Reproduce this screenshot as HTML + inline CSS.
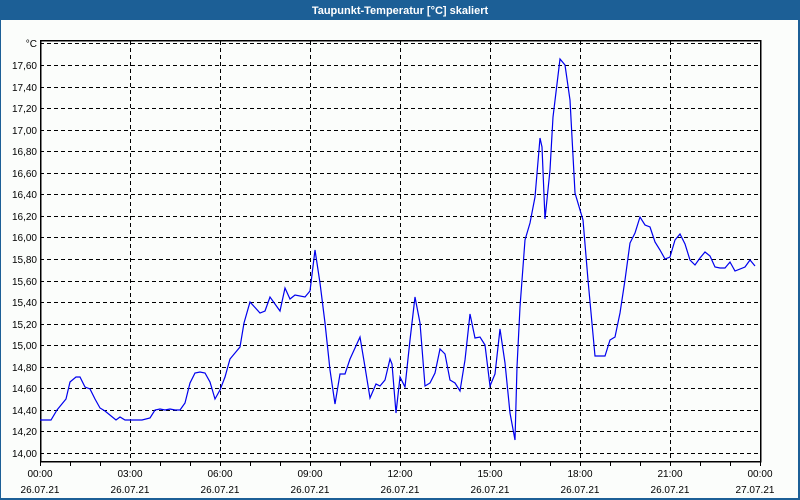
<!DOCTYPE html>
<html><head><meta charset="utf-8"><style>
html,body{margin:0;padding:0;background:#fbfdfb;}
body{width:800px;height:500px;overflow:hidden;position:relative;font-family:"Liberation Sans",sans-serif;}
</style></head><body>
<svg width="800" height="500" xmlns="http://www.w3.org/2000/svg" style="position:absolute;left:0;top:0">
<rect x="0" y="0" width="800" height="500" fill="#1c5f96"/>
<rect x="1" y="20" width="797" height="478" fill="#fbfdfb"/>
<text x="400" y="14" fill="#fff" font-size="11" font-weight="bold" text-anchor="middle" font-family="Liberation Sans, sans-serif">Taupunkt-Temperatur [°C] skaliert</text>
<g stroke="#000" stroke-dasharray="4,3" stroke-width="1" shape-rendering="crispEdges">
<line x1="40" y1="43.5" x2="760" y2="43.5"/>
<line x1="40" y1="65.5" x2="760" y2="65.5"/><line x1="40" y1="87.5" x2="760" y2="87.5"/><line x1="40" y1="108.5" x2="760" y2="108.5"/><line x1="40" y1="130.5" x2="760" y2="130.5"/><line x1="40" y1="151.5" x2="760" y2="151.5"/><line x1="40" y1="173.5" x2="760" y2="173.5"/><line x1="40" y1="194.5" x2="760" y2="194.5"/><line x1="40" y1="216.5" x2="760" y2="216.5"/><line x1="40" y1="237.5" x2="760" y2="237.5"/><line x1="40" y1="259.5" x2="760" y2="259.5"/><line x1="40" y1="281.5" x2="760" y2="281.5"/><line x1="40" y1="302.5" x2="760" y2="302.5"/><line x1="40" y1="324.5" x2="760" y2="324.5"/><line x1="40" y1="345.5" x2="760" y2="345.5"/><line x1="40" y1="367.5" x2="760" y2="367.5"/><line x1="40" y1="388.5" x2="760" y2="388.5"/><line x1="40" y1="410.5" x2="760" y2="410.5"/><line x1="40" y1="431.5" x2="760" y2="431.5"/><line x1="40" y1="453.5" x2="760" y2="453.5"/>
<line x1="130.5" y1="41" x2="130.5" y2="461"/><line x1="220.5" y1="41" x2="220.5" y2="461"/><line x1="310.5" y1="41" x2="310.5" y2="461"/><line x1="400.5" y1="41" x2="400.5" y2="461"/><line x1="490.5" y1="41" x2="490.5" y2="461"/><line x1="580.5" y1="41" x2="580.5" y2="461"/><line x1="670.5" y1="41" x2="670.5" y2="461"/>
</g>
<g stroke="#000" stroke-width="1" shape-rendering="crispEdges">
<rect x="40.5" y="40.5" width="720" height="421" fill="none" stroke-width="1.5"/>
<line x1="70.5" y1="461" x2="70.5" y2="466"/><line x1="100.5" y1="461" x2="100.5" y2="466"/><line x1="130.5" y1="461" x2="130.5" y2="466"/><line x1="160.5" y1="461" x2="160.5" y2="466"/><line x1="190.5" y1="461" x2="190.5" y2="466"/><line x1="220.5" y1="461" x2="220.5" y2="466"/><line x1="250.5" y1="461" x2="250.5" y2="466"/><line x1="280.5" y1="461" x2="280.5" y2="466"/><line x1="310.5" y1="461" x2="310.5" y2="466"/><line x1="340.5" y1="461" x2="340.5" y2="466"/><line x1="370.5" y1="461" x2="370.5" y2="466"/><line x1="400.5" y1="461" x2="400.5" y2="466"/><line x1="430.5" y1="461" x2="430.5" y2="466"/><line x1="460.5" y1="461" x2="460.5" y2="466"/><line x1="490.5" y1="461" x2="490.5" y2="466"/><line x1="520.5" y1="461" x2="520.5" y2="466"/><line x1="550.5" y1="461" x2="550.5" y2="466"/><line x1="580.5" y1="461" x2="580.5" y2="466"/><line x1="610.5" y1="461" x2="610.5" y2="466"/><line x1="640.5" y1="461" x2="640.5" y2="466"/><line x1="670.5" y1="461" x2="670.5" y2="466"/><line x1="700.5" y1="461" x2="700.5" y2="466"/><line x1="730.5" y1="461" x2="730.5" y2="466"/><line x1="40.5" y1="461" x2="40.5" y2="466"/><line x1="760.5" y1="461" x2="760.5" y2="466"/>
</g>
<polyline fill="none" stroke="#0000ee" stroke-width="1.2" points="40,420 51,420 57,410 66,399 70,382 76,377 80,377 85,387 90,389 95,399 100,408 105,411 116,420 120,417 125,420 142,420 150,418 155,410 160,409 165,410 170,409 175,410 180,410 185,403 190,383 195,373 200,372 205,373 210,382 215,399 220,390 225,377 230,359 240,347 244,323 250,302 260,313 265,311 270,297 280,311 285,288 290,299 295,295 305,297 310,291 315,250 320,283 325,323 330,370 335,404 340,374 345,374 350,359 360,337 365,367 370,398 376,384 380,386 385,380 390,359 392,364 396,413 400,377 405,387 410,340 415,297 420,323 425,386 430,383 435,373 440,349 445,354 450,380 455,383 460,391 465,360 470,314 475,338 480,337 485,345 490,386 495,374 500,329 505,363 510,413 515,440 517,367 520,307 525,240 530,223 535,197 540,138 542,147 545,219 550,170 553,117 560,59 565,65 570,100 575,193 583,220 588,280 595,356 605,356 610,340 615,337 620,313 625,280 630,243 635,233 640,217 645,225 650,227 655,242 660,250 665,259 670,257 675,240 680,234 685,244 690,260 695,265 700,258 705,252 710,256 715,267 720,268 725,268 730,262 735,271 745,267 750,260 755,266"/>
<g font-size="10" fill="#000" text-anchor="end" font-family="Liberation Sans, sans-serif">
<text x="37" y="47">°C</text>
<text x="37" y="69">17,60</text><text x="37" y="91">17,40</text><text x="37" y="112">17,20</text><text x="37" y="134">17,00</text><text x="37" y="155">16,80</text><text x="37" y="177">16,60</text><text x="37" y="198">16,40</text><text x="37" y="220">16,20</text><text x="37" y="241">16,00</text><text x="37" y="263">15,80</text><text x="37" y="285">15,60</text><text x="37" y="306">15,40</text><text x="37" y="328">15,20</text><text x="37" y="349">15,00</text><text x="37" y="371">14,80</text><text x="37" y="392">14,60</text><text x="37" y="414">14,40</text><text x="37" y="435">14,20</text><text x="37" y="457">14,00</text>
</g>
<g font-size="10" fill="#000" text-anchor="middle" font-family="Liberation Sans, sans-serif">
<text x="40" y="477">00:00</text><text x="130" y="477">03:00</text><text x="220" y="477">06:00</text><text x="310" y="477">09:00</text><text x="400" y="477">12:00</text><text x="490" y="477">15:00</text><text x="580" y="477">18:00</text><text x="670" y="477">21:00</text><text x="760" y="477">00:00</text>
<text x="40" y="493">26.07.21</text><text x="130" y="493">26.07.21</text><text x="220" y="493">26.07.21</text><text x="310" y="493">26.07.21</text><text x="400" y="493">26.07.21</text><text x="490" y="493">26.07.21</text><text x="580" y="493">26.07.21</text><text x="670" y="493">26.07.21</text><text x="755" y="493">27.07.21</text>
</g>
</svg>
</body></html>
